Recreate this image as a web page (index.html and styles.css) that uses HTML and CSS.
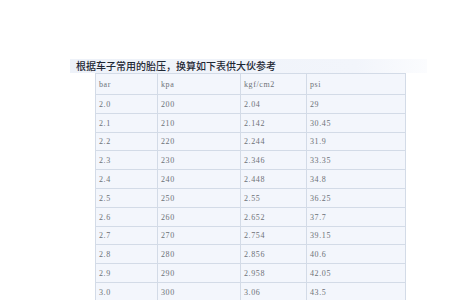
FILE: index.html
```html
<!DOCTYPE html>
<html>
<head>
<meta charset="utf-8">
<link rel="stylesheet" href="styles.css">
</head>
<body>
<div class="page">
  <div class="title">根据车子常用的胎压，换算如下表供大伙参考</div>
  <table class="grid">
    <colgroup><col class="c1"><col class="c2"><col class="c3"><col class="c4"></colgroup>
    <tr class="head"><td>bar</td><td>kpa</td><td>kgf/cm2</td><td>psi</td></tr>
    <tr><td>2.0</td><td>200</td><td>2.04</td><td>29</td></tr>
    <tr><td>2.1</td><td>210</td><td>2.142</td><td>30.45</td></tr>
    <tr><td>2.2</td><td>220</td><td>2.244</td><td>31.9</td></tr>
    <tr><td>2.3</td><td>230</td><td>2.346</td><td>33.35</td></tr>
    <tr><td>2.4</td><td>240</td><td>2.448</td><td>34.8</td></tr>
    <tr><td>2.5</td><td>250</td><td>2.55</td><td>36.25</td></tr>
    <tr><td>2.6</td><td>260</td><td>2.652</td><td>37.7</td></tr>
    <tr><td>2.7</td><td>270</td><td>2.754</td><td>39.15</td></tr>
    <tr><td>2.8</td><td>280</td><td>2.856</td><td>40.6</td></tr>
    <tr><td>2.9</td><td>290</td><td>2.958</td><td>42.05</td></tr>
    <tr><td>3.0</td><td>300</td><td>3.06</td><td>43.5</td></tr>
  </table>
</div>
</body>
</html>
```
FILE: styles.css
```css
html, body {
  margin: 0;
  padding: 0;
  background: #ffffff;
}
.page {
  padding: 59px 0 0 70px;
  width: 357px;
}
.title {
  height: 14px;
  line-height: 14px;
  padding-left: 6px;
  font-family: "Noto Sans CJK SC", "Liberation Serif", serif;
  font-size: 10px;
  font-weight: 500;
  color: #1f2835;
  background: linear-gradient(to right, #eef2f9 0%, #f2f5fb 80%, #fbfcfe 100%);
  white-space: nowrap;
}
.grid {
  margin-left: 25px;
  width: 310px;
  border-collapse: collapse;
  table-layout: fixed;
  background: #f3f6fc;
}
.c1 { width: 62px; }
.c2 { width: 83px; }
.c3 { width: 66px; }
.c4 { width: 99px; }
.grid td {
  height: 16.8px;
  padding: 1px 0 0 3px;
  border: 1px solid #d3dbe7;
  font-family: "Liberation Serif", serif;
  font-size: 8px;
  color: #6d7177;
  letter-spacing: 0.6px;
  white-space: nowrap;
  vertical-align: middle;
}
.grid .head td {
  height: 19px;
}
```
